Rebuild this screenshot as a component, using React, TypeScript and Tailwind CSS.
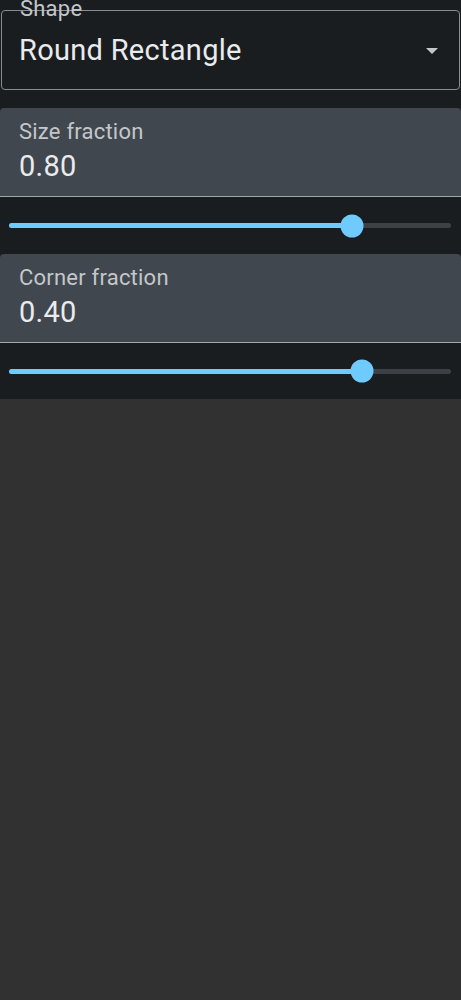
import React from "react";

const sliders = [
  { label: "Size fraction", value: "0.80", pos: 343 / 442 },
  { label: "Corner fraction", value: "0.40", pos: 353 / 442 },
];

function FilledField({ label, value }: { label: string; value: string }) {
  return (
    <div className="bg-[#41474e] rounded-t-[4px] border-b border-[#a3a7ab] h-[89px] pl-[19px] pt-[13px]">
      <div className="text-[22px] leading-[22px] tracking-[0.01em] text-[#c3c7cb]">{label}</div>
      <div className="mt-[9px] text-[29px] leading-[29px] tracking-[0.01em] text-[#e9ebed]">{value}</div>
    </div>
  );
}

function Slider({ pos, h }: { pos: number; h: string }) {
  return (
    <div className={`flex items-center px-[9px] pr-[10px] ${h}`}>
      <div className="relative h-[5px] w-full rounded-full bg-[#3c4146]">
        <div
          className="absolute left-0 top-0 h-[5px] rounded-full bg-[#6fcafd]"
          style={{ width: `${pos * 100}%` }}
        />
        <div
          className="absolute top-1/2 h-[23px] w-[23px] -translate-x-1/2 -translate-y-1/2 rounded-full bg-[#6fcafd]"
          style={{ left: `${pos * 100}%` }}
        />
      </div>
    </div>
  );
}

export default function App() {
  return (
    <div
      className="min-h-screen w-full bg-[#313131]"
      style={{ fontFamily: "Roboto, 'Noto Sans', sans-serif" }}
    >
      <div className="bg-[#1a1d20] pt-[10px]">
        <div className="relative mx-[1px] flex h-[80px] items-center rounded-[4px] border border-[#8a8d90] pl-[17px] pr-[21px]">
          <div className="absolute left-[18px] top-[-10px] text-[22px] leading-[16px] tracking-[0.01em] text-[#c3c7cb]">
            Shape
          </div>
          <div className="flex-1 text-[29px] leading-[29px] tracking-[0.01em] text-[#e9ebed]">Round Rectangle</div>
          <svg width="12" height="6" viewBox="0 0 12 6" className="mt-[1px]">
            <path d="M0 0 L12 0 L6 6 Z" fill="#c4c7ca" />
          </svg>
        </div>
        <div className="mt-[18px]">
          <FilledField label={sliders[0].label} value={sliders[0].value} />
          <Slider pos={sliders[0].pos} h="h-[57px]" />
          <FilledField label={sliders[1].label} value={sliders[1].value} />
          <Slider pos={sliders[1].pos} h="h-[56px]" />
        </div>
      </div>
    </div>
  );
}
